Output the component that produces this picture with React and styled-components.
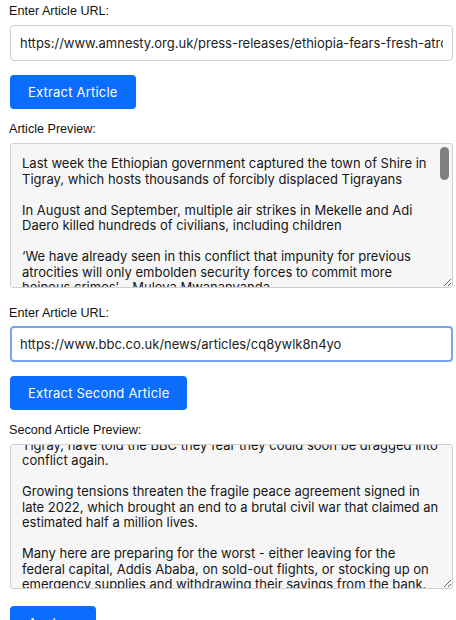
import { useEffect, useRef } from 'react';
import styled, { createGlobalStyle, css } from 'styled-components';

const GlobalStyle = createGlobalStyle`
  html, body {
    margin: 0;
    padding: 0;
    background: #ffffff;
  }
  body {
    font-family: "Liberation Sans", Arial, sans-serif;
    color: #111;
  }
`;

const Page = styled.div`
  padding: 3px 3px 0 10px;
  display: flex;
  flex-direction: column;
`;

const Section = styled.div`
  display: flex;
  flex-direction: column;
`;

const Label = styled.label`
  display: block;
  font-size: 12.6px;
  line-height: 16px;
  margin-left: -1px;
  margin-bottom: ${props => props.$gap || 6}px;
  color: #111;
`;

const UrlInput = styled.input`
  box-sizing: border-box;
  width: 443px;
  height: 36px;
  padding: 0 9px;
  font-family: Inter, "Liberation Sans", sans-serif;
  font-size: 13px;
  color: #222;
  background: #fff;
  border: 1px solid #cfcfcf;
  border-radius: 4px;
  outline: none;
  ${props => props.$focused && css`
    border: 2px solid #7aa5ee;
    padding: 0 8px;
  `}
`;

const Button = styled.button`
  align-self: flex-start;
  margin-top: ${props => props.$top ?? 14}px;
  margin-bottom: 12px;
  height: 34px;
  padding: 0 18px;
  border: none;
  border-radius: 4px;
  background-color: #0a6dfe;
  color: #fff;
  font-family: Inter, "Liberation Sans", sans-serif;
  font-size: 13px;
  letter-spacing: 0.2px;
  cursor: pointer;
`;

const PreviewBox = styled.div`
  position: relative;
  width: 443px;
  margin-bottom: 17px;
`;

const Preview = styled.textarea`
  box-sizing: border-box;
  width: 443px;
  height: 145px;
  margin: 0;
  padding: 12px ${props => props.$padRight ?? 14}px 12px 11px;
  font-family: Inter, "Liberation Sans", sans-serif;
  font-size: 13px;
  line-height: 15.5px;
  color: #161616;
  background: #f6f6f6;
  border: 1px solid #cfcfcf;
  border-radius: 3px;
  display: block;
  outline: none;
  &::-webkit-scrollbar { width: 0; }
`;

const ScrollThumb = styled.div`
  position: absolute;
  top: 4px;
  right: 4px;
  width: 9px;
  height: 33px;
  border-radius: 5px;
  background: #808080;
  pointer-events: none;
`;

const firstText = `Last week the Ethiopian government captured the town of Shire in Tigray, which hosts thousands of forcibly displaced Tigrayans

In August and September, multiple air strikes in Mekelle and Adi Daero killed hundreds of civilians, including children

‘We have already seen in this conflict that impunity for previous atrocities will only embolden security forces to commit more heinous crimes’ - Muleya Mwananyanda

Responding to reports that civilians are at imminent risk of further atrocities as Ethiopian and Eritrean forces gain control of several towns in the Tigray region, Muleya Mwananyanda, Amnesty International’s Deputy Director for East and Southern Africa, said:

“The parties to the conflict must take all necessary measures to protect civilians and prevent further violations of international humanitarian law.

“Civilians in Tigray have already suffered unspeakable horrors, including mass killings, sexual violence and the deliberate denial of food and medicine.

“The international community must not look away. Independent investigators must be given access to the region without delay.”`;

const secondText = `People in Mekelle and thousands displaced from their homes in Tigray, have told the BBC they fear they could soon be dragged into conflict again.

Growing tensions threaten the fragile peace agreement signed in late 2022, which brought an end to a brutal civil war that claimed an estimated half a million lives.

Many here are preparing for the worst - either leaving for the federal capital, Addis Ababa, on sold-out flights, or stocking up on emergency supplies and withdrawing their savings from the bank.

Banks have limited withdrawals and queues form early each morning outside cash machines.`;

const App = () => {
  const secondRef = useRef(null);

  useEffect(() => {
    if (secondRef.current) secondRef.current.scrollTop = 34.5;
  }, []);

  return (
    <Page>
      <GlobalStyle />
      <Section>
        <Label>Enter Article URL:</Label>
        <UrlInput
          type="text"
          defaultValue="https://www.amnesty.org.uk/press-releases/ethiopia-fears-fresh-atrocities-tigray"
        />
        <Button>Extract Article</Button>
        <Label>Article Preview:</Label>
        <PreviewBox>
          <Preview readOnly defaultValue={firstText} />
          <ScrollThumb />
        </PreviewBox>
      </Section>
      <Section>
        <Label $gap={5}>Enter Article URL:</Label>
        <UrlInput
          type="text"
          $focused
          defaultValue="https://www.bbc.co.uk/news/articles/cq8ywlk8n4yo"
        />
        <Button>Extract Second Article</Button>
        <Label>Second Article Preview:</Label>
        <PreviewBox>
          <Preview readOnly $padRight={11} ref={secondRef} defaultValue={secondText} />
        </PreviewBox>
      </Section>
      <Button $top={0}>Analyze</Button>
    </Page>
  );
};

export default App;
